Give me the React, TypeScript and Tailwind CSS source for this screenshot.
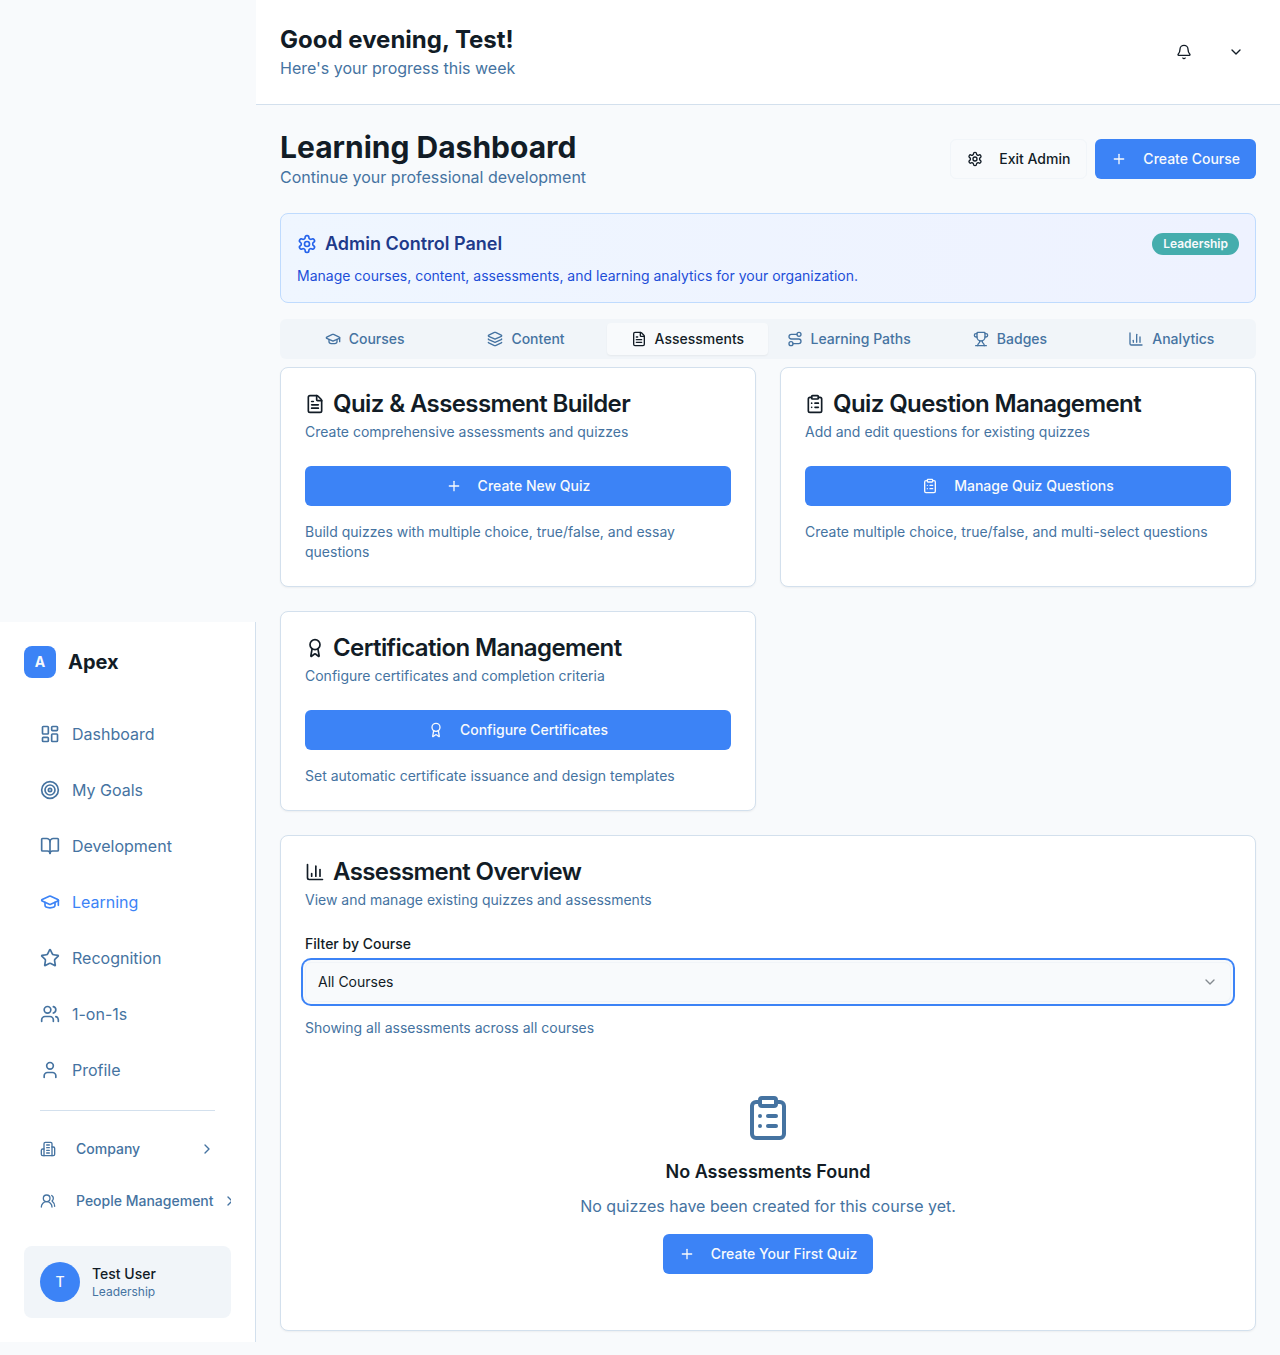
import type { ReactNode } from "react";
import {
  Award,
  Bell,
  BookOpen,
  ChartColumn,
  ChevronDown,
  ChevronRight,
  ClipboardList,
  FileText,
  GraduationCap,
  Layers,
  LayoutDashboard,
  Plus,
  Route,
  Target,
  Trophy,
  User,
  Users,
  UsersRound,
} from "lucide-react";

type IconProps = { className?: string };
type IconType = (props: IconProps) => ReactNode;

function Stroke({ className, children }: { className?: string; children: ReactNode }) {
  return (
    <svg
      viewBox="0 0 24 24"
      fill="none"
      stroke="currentColor"
      strokeWidth="2"
      strokeLinecap="round"
      strokeLinejoin="round"
      className={className}
    >
      {children}
    </svg>
  );
}

function Building({ className }: IconProps) {
  return (
    <Stroke className={className}>
      <path d="M6 22V4a2 2 0 0 1 2-2h8a2 2 0 0 1 2 2v18Z" />
      <path d="M6 12H4a2 2 0 0 0-2 2v6a2 2 0 0 0 2 2h2" />
      <path d="M18 9h2a2 2 0 0 1 2 2v9a2 2 0 0 1-2 2h-2" />
      <path d="M10 6h4M10 10h4M10 14h4M10 18h4" />
    </Stroke>
  );
}

function Star({ className }: IconProps) {
  return (
    <Stroke className={className}>
      <path d="M11.525 2.295a.53.53 0 0 1 .95 0l2.31 4.679a2.123 2.123 0 0 0 1.595 1.16l5.166.756a.53.53 0 0 1 .294.904l-3.736 3.638a2.123 2.123 0 0 0-.611 1.878l.882 5.14a.53.53 0 0 1-.771.56l-4.618-2.428a2.122 2.122 0 0 0-1.973 0L6.396 21.01a.53.53 0 0 1-.77-.56l.881-5.139a2.122 2.122 0 0 0-.611-1.879L2.16 9.795a.53.53 0 0 1 .294-.906l5.165-.755a2.122 2.122 0 0 0 1.597-1.16z" />
    </Stroke>
  );
}

function Gear({ className }: IconProps) {
  return (
    <Stroke className={className}>
      <path d="M12.22 2h-.44a2 2 0 0 0-2 2v.18a2 2 0 0 1-1 1.73l-.43.25a2 2 0 0 1-2 0l-.15-.08a2 2 0 0 0-2.73.73l-.22.38a2 2 0 0 0 .73 2.73l.15.1a2 2 0 0 1 1 1.72v.51a2 2 0 0 1-1 1.74l-.15.09a2 2 0 0 0-.73 2.73l.22.38a2 2 0 0 0 2.73.73l.15-.08a2 2 0 0 1 2 0l.43.25a2 2 0 0 1 1 1.73V20a2 2 0 0 0 2 2h.44a2 2 0 0 0 2-2v-.18a2 2 0 0 1 1-1.73l.43-.25a2 2 0 0 1 2 0l.15.08a2 2 0 0 0 2.73-.73l.22-.39a2 2 0 0 0-.73-2.73l-.15-.08a2 2 0 0 1-1-1.74v-.5a2 2 0 0 1 1-1.74l.15-.09a2 2 0 0 0 .73-2.73l-.22-.38a2 2 0 0 0-2.73-.73l-.15.08a2 2 0 0 1-2 0l-.43-.25a2 2 0 0 1-1-1.73V4a2 2 0 0 0-2-2z" />
      <circle cx="12" cy="12" r="3" />
    </Stroke>
  );
}

const navItems: { label: string; Icon: IconType; active?: boolean }[] = [
  { label: "Dashboard", Icon: (p) => <LayoutDashboard {...p} /> },
  { label: "My Goals", Icon: (p) => <Target {...p} /> },
  { label: "Development", Icon: (p) => <BookOpen {...p} /> },
  { label: "Learning", Icon: (p) => <GraduationCap {...p} />, active: true },
  { label: "Recognition", Icon: Star },
  { label: "1-on-1s", Icon: (p) => <Users {...p} /> },
  { label: "Profile", Icon: (p) => <User {...p} /> },
];

const tabs: { label: string; Icon: IconType; active?: boolean }[] = [
  { label: "Courses", Icon: (p) => <GraduationCap {...p} /> },
  { label: "Content", Icon: (p) => <Layers {...p} /> },
  { label: "Assessments", Icon: (p) => <FileText {...p} />, active: true },
  { label: "Learning Paths", Icon: (p) => <Route {...p} /> },
  { label: "Badges", Icon: (p) => <Trophy {...p} /> },
  { label: "Analytics", Icon: (p) => <ChartColumn {...p} /> },
];

function PrimaryButton({ icon, children, full }: { icon: ReactNode; children: ReactNode; full?: boolean }) {
  return (
    <button
      className={`${full ? "w-full" : ""} inline-flex h-10 items-center justify-center gap-4 whitespace-nowrap rounded-md bg-[#3c83f6] px-4 text-sm font-medium text-[#f8fafc]`}
    >
      {icon}
      {children}
    </button>
  );
}

function Card({
  icon,
  title,
  description,
  children,
}: {
  icon: ReactNode;
  title: string;
  description: string;
  children: ReactNode;
}) {
  return (
    <section className="rounded-lg border border-[#d3e0ed] bg-white shadow-xs">
      <div className="flex flex-col gap-1.5 p-6">
        <h3 className="flex items-center gap-2 text-2xl leading-none font-semibold tracking-tight">
          {icon}
          {title}
        </h3>
        <p className="text-sm text-[#4573a1]">{description}</p>
      </div>
      <div className="px-6 pb-6">{children}</div>
    </section>
  );
}

function Sidebar() {
  return (
    <aside className="mt-[622px] flex h-[720px] w-64 shrink-0 flex-col border-r border-[#d3e0ed] bg-white p-6">
      <div className="mb-8 flex items-center gap-3">
        <div className="flex size-8 items-center justify-center rounded-lg bg-[#3c83f6] text-sm font-bold text-[#f8fafc]">
          A
        </div>
        <span className="text-xl leading-8 font-bold">Apex</span>
      </div>
      <nav className="flex flex-col gap-2">
        {navItems.map(({ label, Icon, active }) => (
          <a
            key={label}
            className={`flex h-12 items-center gap-3 px-4 ${active ? "text-[#3c83f6]" : "text-[#4573a1]"}`}
          >
            <Icon className="size-5" />
            <span>{label}</span>
          </a>
        ))}
      </nav>
      <div className="mx-4 mt-4 border-t border-[#d3e0ed]" />
      <div className="mt-[18px] flex flex-col gap-3 overflow-hidden text-sm font-medium text-[#4573a1]">
        <button className="flex h-10 items-center justify-between gap-2 px-4">
          <span className="flex items-center gap-5">
            <Building className="size-4" />
            Company
          </span>
          <ChevronRight className="size-4 shrink-0" />
        </button>
        <button className="flex h-10 items-center gap-2 pl-4 whitespace-nowrap">
          <span className="flex shrink-0 items-center gap-5">
            <UsersRound className="size-4" />
            People Management
          </span>
          <ChevronRight className="size-4 shrink-0" />
        </button>
      </div>
      <div className="mt-auto flex items-center gap-3 rounded-lg bg-[#f1f5f9] p-4">
        <div className="flex size-10 items-center justify-center rounded-full bg-[#3c83f6] text-sm font-medium text-[#f8fafc]">
          T
        </div>
        <div>
          <p className="text-sm font-medium">Test User</p>
          <p className="text-xs text-[#4573a1]">Leadership</p>
        </div>
      </div>
    </aside>
  );
}

export default function App() {
  return (
    <div className="flex min-h-[1355px] bg-[#f8fafc] font-['Inter',sans-serif] text-[#121c26]">
      <Sidebar />
      <div className="min-w-0 flex-1">
        <header className="flex items-center justify-between border-b border-[#d3e0ed] bg-white p-6">
          <div>
            <h2 className="text-2xl font-bold">Good evening, Test!</h2>
            <p className="text-[#4573a1]">Here's your progress this week</p>
          </div>
          <div className="flex items-center gap-3">
            <button className="flex size-10 items-center justify-center">
              <Bell className="size-4" />
            </button>
            <button className="flex size-10 items-center justify-center">
              <ChevronDown className="size-4" />
            </button>
          </div>
        </header>

        <main className="p-6">
          <div className="flex items-center justify-between">
            <div>
              <h1 className="text-3xl font-bold">Learning Dashboard</h1>
              <p className="text-[#4573a1]">Continue your professional development</p>
            </div>
            <div className="flex gap-2">
              <button className="inline-flex h-10 items-center gap-4 rounded-md border border-[#f1f5f9] px-4 text-sm font-medium">
                <Gear className="size-4" />
                Exit Admin
              </button>
              <PrimaryButton icon={<Plus className="size-4" />}>Create Course</PrimaryButton>
            </div>
          </div>

          <section className="mt-6 rounded-lg border border-[#bfdbfe] bg-linear-to-r from-[#eff6ff] to-[#eef2ff] p-4">
            <div className="flex items-center justify-between">
              <h2 className="flex items-center gap-2 text-lg font-semibold text-[#1e3a8a]">
                <Gear className="size-5 text-[#2563eb]" />
                Admin Control Panel
              </h2>
              <span className="rounded-full border border-transparent bg-[#45adad] bg-clip-border px-2.5 py-0.5 text-xs font-semibold text-[#f8fafc]">
                Leadership
              </span>
            </div>
            <p className="mt-2 text-sm text-[#1d4ed8]">
              Manage courses, content, assessments, and learning analytics for your organization.
            </p>
          </section>

          <div className="mt-4 grid h-10 grid-cols-6 rounded-md bg-[#f1f5f9] p-1 text-sm font-medium text-[#4573a1]">
            {tabs.map(({ label, Icon, active }) => (
              <button
                key={label}
                className={`flex items-center justify-center gap-2 rounded-sm whitespace-nowrap ${active ? "bg-[#f8fafc] text-[#121c26] shadow-xs" : ""}`}
              >
                <Icon className="size-4" />
                {label}
              </button>
            ))}
          </div>

          <div className="mt-2 grid grid-cols-2 gap-6">
            <Card
              icon={<FileText className="size-5" />}
              title="Quiz & Assessment Builder"
              description="Create comprehensive assessments and quizzes"
            >
              <PrimaryButton full icon={<Plus className="size-4" />}>
                Create New Quiz
              </PrimaryButton>
              <p className="mt-4 text-sm text-[#4573a1]">
                Build quizzes with multiple choice, true/false, and essay questions
              </p>
            </Card>
            <Card
              icon={<ClipboardList className="size-5" />}
              title="Quiz Question Management"
              description="Add and edit questions for existing quizzes"
            >
              <PrimaryButton full icon={<ClipboardList className="size-4" />}>
                Manage Quiz Questions
              </PrimaryButton>
              <p className="mt-4 text-sm text-[#4573a1]">
                Create multiple choice, true/false, and multi-select questions
              </p>
            </Card>
            <Card
              icon={<Award className="size-5" />}
              title="Certification Management"
              description="Configure certificates and completion criteria"
            >
              <PrimaryButton full icon={<Award className="size-4" />}>
                Configure Certificates
              </PrimaryButton>
              <p className="mt-4 text-sm text-[#4573a1]">Set automatic certificate issuance and design templates</p>
            </Card>
          </div>

          <div className="mt-6">
            <Card
              icon={<ChartColumn className="size-5" />}
              title="Assessment Overview"
              description="View and manage existing quizzes and assessments"
            >
              <p className="text-sm font-medium">Filter by Course</p>
              <button className="mt-2 flex h-10 w-full items-center justify-between rounded-md border border-[#f1f5f9] bg-[#f8fafc] px-3 text-sm ring-2 ring-[#3c83f6] ring-offset-2 ring-offset-[#f8fafc]">
                All Courses
                <ChevronDown className="size-4 opacity-50" />
              </button>
              <p className="mt-4 text-sm text-[#4573a1]">Showing all assessments across all courses</p>
              <div className="mt-6 flex flex-col items-center py-8">
                <ClipboardList className="size-12 text-[#4573a1]" />
                <h3 className="mt-4 text-lg font-semibold">No Assessments Found</h3>
                <p className="mt-2 mb-4 text-[#4573a1]">No quizzes have been created for this course yet.</p>
                <PrimaryButton icon={<Plus className="size-4" />}>Create Your First Quiz</PrimaryButton>
              </div>
            </Card>
          </div>
        </main>
      </div>
    </div>
  );
}
